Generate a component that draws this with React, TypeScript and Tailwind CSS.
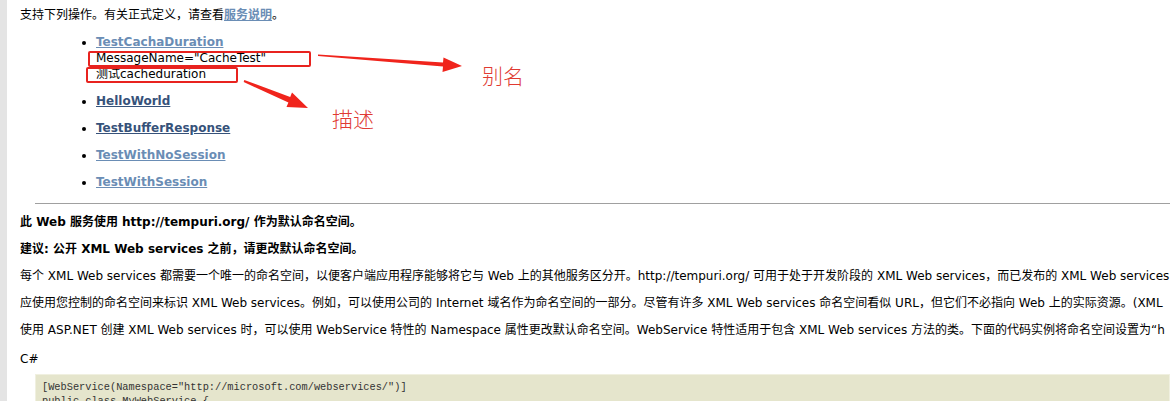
const ops = [
  { name: "TestCachaDuration", visited: true, extra: true },
  { name: "HelloWorld", visited: false },
  { name: "TestBufferResponse", visited: false },
  { name: "TestWithNoSession", visited: true },
  { name: "TestWithSession", visited: true },
];

export default function App() {
  return (
    <div className="relative w-[1170px] h-[401px] overflow-hidden bg-white flex font-['DejaVu_Sans','Noto_Sans_CJK_SC',sans-serif] text-[12px] text-black">
      <div className="w-[7px] shrink-0 bg-[#e4e4e4]" />
      <div className="flex-1 min-w-0 pl-[13px] whitespace-nowrap">
        <p className="mt-[6px] leading-[18px]">
          支持下列操作。有关正式定义，请查看
          <a className="font-bold underline text-[#6a8db5]">服务说明</a>。
        </p>

        <ul className="mt-[10px] ml-[76px] list-disc">
          {ops.map((op) => (
            <li key={op.name} className="mb-[11px] leading-[16px]">
              <a
                className={
                  "font-bold underline " +
                  (op.visited ? "text-[#6a8db5]" : "text-[#36527a]")
                }
              >
                {op.name}
              </a>
              {op.extra && (
                <>
                  <br />
                  <span>MessageName="CacheTest"</span>
                  <br />
                  <span>测试cacheduration</span>
                </>
              )}
            </li>
          ))}
        </ul>

        <hr className="ml-[15px] mt-[13px] mb-[9px] border-t border-[#a0a0a0]" />

        <div className="flex flex-col gap-[9px] leading-[18px]">
          <p className="font-bold">
            此 Web 服务使用 http://tempuri.org/ 作为默认命名空间。
          </p>
          <p className="font-bold">建议: 公开 XML Web services 之前，请更改默认命名空间。</p>
          <p>
            每个 XML Web services 都需要一个唯一的命名空间，以便客户端应用程序能够将它与 Web 上的其他服务区分开。http://tempuri.org/ 可用于处于开发阶段的 XML Web services，而已发布的 XML Web services
          </p>
          <p>
            应使用您控制的命名空间来标识 XML Web services。例如，可以使用公司的 Internet 域名作为命名空间的一部分。尽管有许多 XML Web services 命名空间看似 URL，但它们不必指向 Web 上的实际资源。(XML
          </p>
          <p>
            使用 ASP.NET 创建 XML Web services 时，可以使用 WebService 特性的 Namespace 属性更改默认命名空间。WebService 特性适用于包含 XML Web services 方法的类。下面的代码实例将命名空间设置为“h
          </p>
          <p className="mt-[2px]">C#</p>
        </div>

        <pre className="ml-[15px] mt-[6px] pl-[6px] pt-[5px] bg-[#e5e5cc] border border-[#f0f0e0] font-['Liberation_Mono',monospace] text-[10.3px] leading-[14px] text-[#333]">
{`[WebService(Namespace="http://microsoft.com/webservices/")]
public class MyWebService {
    // 实现
}`}
        </pre>
      </div>

      {/* annotations */}
      <div className="absolute left-[88px] top-[51px] w-[223px] h-[16px] border-[2.5px] border-[#e8231f] rounded-[2px]" />
      <div className="absolute left-[86px] top-[67px] w-[152px] h-[16px] border-[2.5px] border-[#e8231f] rounded-[2px]" />
      <svg className="absolute left-0 top-0 pointer-events-none" width="1170" height="401">
        <polygon
          fill="#f0241c"
          points="318,54.5 443,62.5 443.5,57.5 462,66 442.5,72 443,66.5 318,56"
        />
        <polygon
          fill="#f0241c"
          points="244.3,80 290.2,97 292,92.5 308,108 286.5,107 288.4,102.5 243.7,82"
        />
      </svg>
      <span className="absolute left-[482px] top-[62px] text-[21px] leading-[26px] text-[#e03a32] font-['Noto_Sans_CJK_SC',sans-serif] font-light">
        别名
      </span>
      <span className="absolute left-[332px] top-[105px] text-[21px] leading-[26px] text-[#e03a32] font-['Noto_Sans_CJK_SC',sans-serif] font-light">
        描述
      </span>
    </div>
  );
}
